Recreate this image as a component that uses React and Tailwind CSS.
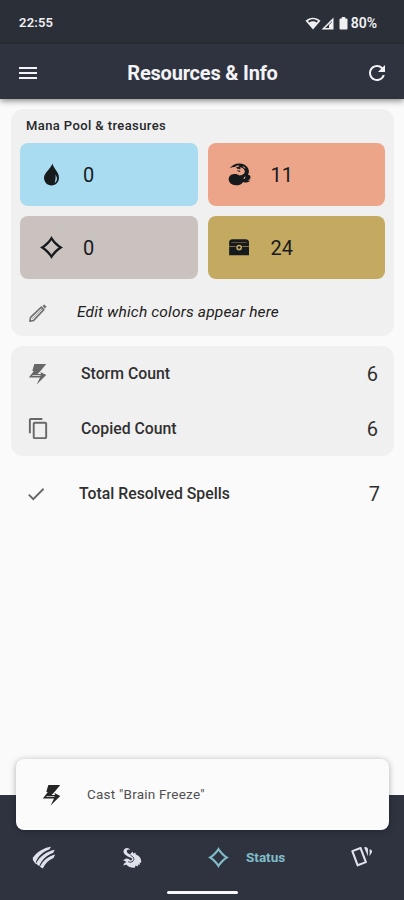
import React from "react";
import { MdMenu, MdRefresh, MdCheck, MdContentCopy } from "react-icons/md";

function Icon({ className, children }) {
  return (
    <svg viewBox="0 0 24 24" fill="currentColor" className={className}>
      {children}
    </svg>
  );
}

const DropIcon = ({ className }) => (
  <Icon className={className}>
    <path d="M13.1.6c.2 4.300 6.700 8.600 6.700 14.800 0 4.500-3.300 8-7.800 8s-7.800-3.500-7.800-8C4.200 10.700 10.200 7 13.100.6z" />
    <path d="M16.200 12.200c2.300 3.300 1.900 6.800-1 8.600 1-2.600 1.300-5.600 1-8.600z" fill="#a9dcf0" />
  </Icon>
);

const FlameIcon = ({ className }) => (
  <Icon className={className}>
    <path d="M1.800 5.500C4.500 2 8.300.2 12.500.6c5.300.5 9 3.600 9.300 7.800.1 1.500-.3 2.800-1 3.800 1.800.1 2.900 1.200 2.700 2.800-.1 1.700-1.500 2.800-3.200 3 .9.500 2 .6 3 .3-1.700 2.100-4.700 2.600-7.500 1.400-1.600 2.500-4.500 3.800-7.800 3.500C3.800 22.900.7 20.300.7 16.900c0-3.200 2.500-5.500 6.300-5.500 2 0 3.800.6 5.200 1.700 1.500-.3 3-.8 4-1.600 1.700-1.300 1.800-3.400.4-5-1.100-1.300-2.700-1.900-4.600-1.700.8.500 1.200 1.200 1 2-1.300-.7-2.500-.9-3.600-.5.1-.9-.2-1.500-1-1.800-2.200-.6-4.500 0-6.600 1z" />
    <path d="M9.500 7.800c1.300-.4 2.600 0 3.700 1-1.200.6-2.500.4-3.700-1z" />
    <path d="M7 3.800c1.500-1 3.200-1.300 5-1l-1.500 1.400zM14.800 3c1.800.5 3.100 1.500 3.900 3l-2-.8zM16.300 16.700c-.1-1.700.9-2.800 2.500-2.700-.9.700-1.100 1.500-1.200 2.500z" fill="#eda589" />
  </Icon>
);

const DiamondIcon = ({ className }) => (
  <Icon className={className}>
    <path
      fillRule="evenodd"
      d="M12 0C14 4.200 19.800 10 24 12c-4.200 2-10 7.800-12 12C10 19.800 4.200 14 0 12 4.200 10 10 4.200 12 0zm0 4.500C10.200 7.200 7.200 10.200 4.500 12c2.700 1.800 5.700 4.800 7.500 7.500 1.800-2.700 4.800-5.700 7.500-7.500-2.700-1.800-5.700-4.800-7.500-7.500z"
    />
  </Icon>
);

const ChestIcon = ({ className }) => (
  <Icon className={className}>
    <path d="M4.500 3.500h14q3 0 3.400 3v13.500H1.200V6.500q.3-3 3.300-3z" />
    <path d="M3.500 6.200h16v.7h-16zM1.200 10.800H8v.8H1.200zM15 10.800h6.900v.8H15z" fill="#a68d4d" />
    <circle cx="11.600" cy="12" r="3" fill="#c4aa61" />
    <circle cx="11.600" cy="12" r="1.400" />
  </Icon>
);

const PencilIcon = ({ className }) => (
  <Icon className={className}>
    <g fill="none" stroke="currentColor" strokeWidth="1.900" strokeLinejoin="round">
      <path d="M2.200 21.800l.9-4.600L16 5l3 3L6.800 20.900z" />
      <path d="M5 19L17.300 6.700" strokeWidth=".7" />
    </g>
    <path d="M17.300 3.700l2.200-2 2.800 2.800-2 2.200z" />
  </Icon>
);

const StormIcon = ({ className }) => (
  <Icon className={className}>
    <path d="M8 1h13l-6.300 7.700L11.500 12h3.800l-.6-2.200 6.300 3.400L10.500 23.500l3.700-7.700H2L7.300 9l-1.500-.5z" />
    <path d="M6.300 13.200h8.500v1H5.500z" className="text-[#fafafa]" fillOpacity=".7" />
  </Icon>
);

const SlashIcon = ({ className }) => (
  <Icon className={className}>
    <path d="M.3 12.300C4.500 6.300 11.500 1.800 19.300.7L17.800 3.400C11.500 5.600 6.500 9.900 3.700 16.200l-.3 2.800-3-4.300z" />
    <path d="M3.600 18.300C7.800 10.800 14 6 23.200 4l-1.700 3.200C15.100 9.200 10.100 14 6.900 21z" />
    <path d="M7.700 21.700C11.200 15 16.500 10.600 23.700 8.900l-1.800 3.700c-5 2-8.600 5.800-11.200 11z" />
  </Icon>
);

const SerpentIcon = ({ className }) => (
  <Icon className={className}>
    <path d="M10.500 3.500C8.700 2.300 6.600 3 6.700 5c.1 1.700 2 2.500 4.200 3.500.2-1.700 1.100-2.700 2.800-3.200v2l3-.8v1.800c4.400 1.900 7 5.100 6.300 9.600l-1.700.2.4 2.200-2.400-.3.300 2.300-3-1.200-.8 2.600c-3.900.3-7-.5-9.200-3.100-1.300-.6-2.700-.2-3.600 1-.2-2.300.8-3.900 2.900-4.300-.8-1.400-2-1.900-3.400-1.300 1-2.900 4.200-3.800 6.500-2.200.9.700 1.500 1.700 2.700 1.400 1.300-.4 1.300-1.800.1-2.500-1.300-.8-2.800-1.200-4.500-2.200C2.700 7.800 1.900 4.900 3.800 2.500 5.700.3 9.500.7 10.500 3.500z" />
    <path d="M11 9.700c3.600 1.200 4.700 4.300 2.700 6.400-1.400 1.400-3.600 1.600-5.400.7" fill="none" stroke="#2f3340" strokeWidth="1.100" />
  </Icon>
);

const CardsIcon = ({ className }) => (
  <Icon className={className}>
    <path d="M2 5.600L11 2.300l5.800 15.300-9 3.500z" fill="none" stroke="currentColor" strokeWidth="2.300" strokeLinejoin="round" />
    <path d="M14.800 1.500l1.700-.3c1.400.2 2.300 1 2.500 2.400l.1 7.700z" />
    <path d="M20.900 3.600c2.300.4 2.900 1.600 2.400 3.200l-2.500 4.400z" />
  </Icon>
);

const MANA = [
  { id: "blue", value: 0, bg: "bg-[#a9dcf0]", icon: DropIcon },
  { id: "red", value: 11, bg: "bg-[#eda589]", icon: FlameIcon },
  { id: "colorless", value: 0, bg: "bg-[#cac2be]", icon: DiamondIcon },
  { id: "treasure", value: 24, bg: "bg-[#c4aa61]", icon: ChestIcon },
];

function StatusBar() {
  return (
    <div className="flex h-11 items-center justify-between bg-[#2b2f38] pt-0.5 pr-[27px] pl-[19px] text-[13px] font-semibold text-[#f0f0f2]">
      <span className="tracking-[0.2px]">22:55</span>
      <div className="flex items-center">
        <svg viewBox="0 0 16 13" className="h-[13px] w-4" fill="currentColor">
          <path d="M.5 3.700C5-.4 11-.4 15.500 3.700L8 12.500z" />
          <path d="M3 4c3-2.200 7-2.200 10 0l-1.200 1.400c-2.300-1.500-5.300-1.500-7.600 0z" fill="#2b2f38" />
        </svg>
        <svg viewBox="0 0 13 13" className="h-[13px] w-[13px]" fill="currentColor">
          <path d="M12.500.5v12H.5zM11 4.200L4.200 11H8V8l3-3z" fillRule="evenodd" />
        </svg>
        <svg viewBox="0 0 9 13" className="ml-[5px] h-[13px] w-[9px]" fill="currentColor">
          <path d="M2.800 0h3.400v1.500h1.300q1 0 1 1v9q0 1-1 1h-6q-1 0-1-1v-9q0-1 1-1h1.300z" />
        </svg>
        <span className="ml-[3px] text-[14px]">80%</span>
      </div>
    </div>
  );
}

function AppBar() {
  return (
    <header className="relative flex h-[55px] items-center justify-between bg-[#2f3340] pt-[3px] pr-[15px] pl-4 text-[#f3f3f5] shadow-[0_2px_6px_rgba(0,0,0,0.45)]">
      <MdMenu size={24} />
      <h1 className="text-[20px] font-bold tracking-[-0.2px]">Resources & Info</h1>
      <MdRefresh size={24} />
    </header>
  );
}

function ManaTile({ value, bg, icon: TileIcon }) {
  return (
    <div className={`${bg} flex h-[63px] items-center gap-5 rounded-lg pl-5 text-[#171a1d]`}>
      <TileIcon className="h-[23px] w-[23px]" />
      <span className="pt-px text-[20px]">{value}</span>
    </div>
  );
}

function CountRow({ icon, label, value, className = "pl-4" }) {
  return (
    <div className={`flex h-[55px] items-center text-[#303030] ${className}`}>
      <span className="w-[54px] text-[#686868]">{icon}</span>
      <span className="text-[15.800px] font-medium">{label}</span>
      <span className="ml-auto pt-px text-[20px]">{value}</span>
    </div>
  );
}

function BottomNav() {
  return (
    <nav className="h-[105px] bg-[#2f3340] pt-[50px] text-[#dfe1eb]">
      <div className="flex h-6 items-center pr-[31px] pl-8">
        <SlashIcon className="h-[23px] w-6" />
        <SerpentIcon className="ml-[65px] h-[23px] w-[21px]" />
        <div className="ml-[66px] flex items-center gap-[17px] text-[#80bdc8]">
          <DiamondIcon className="h-[21px] w-[21px]" />
          <span className="pt-px text-[13.500px] font-bold">Status</span>
        </div>
        <CardsIcon className="ml-auto h-[22px] w-[23px]" />
      </div>
      <div className="mx-auto mt-[22px] h-[3px] w-[71px] rounded-full bg-[#f7f7f7]" />
    </nav>
  );
}

export default function App() {
  return (
    <div className="relative flex h-[900px] w-[404px] flex-col overflow-hidden bg-[#fafafa] font-['Roboto',sans-serif]">
      <StatusBar />
      <AppBar />

      <main className="flex-1 pt-2.5 pr-2.5 pl-[11px]">
        <section className="h-[227px] rounded-xl bg-[#f0f0f0] px-[9px] pt-2">
          <h2 className="mb-[9px] pl-1.5 text-[13px] leading-[17px] font-medium tracking-[0.4px] text-[#25272b]">
            Mana Pool & treasures
          </h2>
          <div className="grid grid-cols-2 gap-2.5">
            {MANA.map((m) => (
              <ManaTile key={m.id} {...m} />
            ))}
          </div>
          <div className="mt-[22px] flex items-center pl-2">
            <PencilIcon className="h-5 w-5 text-[#707070]" />
            <span className="ml-[29px] text-[15.500px] tracking-[0.17px] text-[#202020] italic">
              Edit which colors appear here
            </span>
          </div>
        </section>

        <section className="mt-2.5 h-[110px] rounded-xl bg-[#f0f0f0]">
          <CountRow icon={<StormIcon className="h-[22px] w-[22px]" />} label="Storm Count" value={6} className="pr-4 pl-4" />
          <CountRow icon={<MdContentCopy size={23} />} label="Copied Count" value={6} className="pr-4 pl-4" />
        </section>

        <CountRow
          icon={<MdCheck size={22} />}
          label="Total Resolved Spells"
          value={7}
          className="mt-2.5 pr-3.5 pl-3.5"
        />
      </main>

      <BottomNav />

      {/* Toast */}
      <div className="absolute top-[759px] left-4 flex h-[71px] w-[373px] items-center rounded-lg bg-[#fbfbfb] pl-[25px] text-[#252525] shadow-[0_1px_6px_rgba(0,0,0,0.3)]">
        <StormIcon className="h-[22px] w-[22px]" />
        <span className="ml-6 text-[13.500px] tracking-[0.23px] text-[#505050]">Cast "Brain Freeze"</span>
      </div>
    </div>
  );
}
